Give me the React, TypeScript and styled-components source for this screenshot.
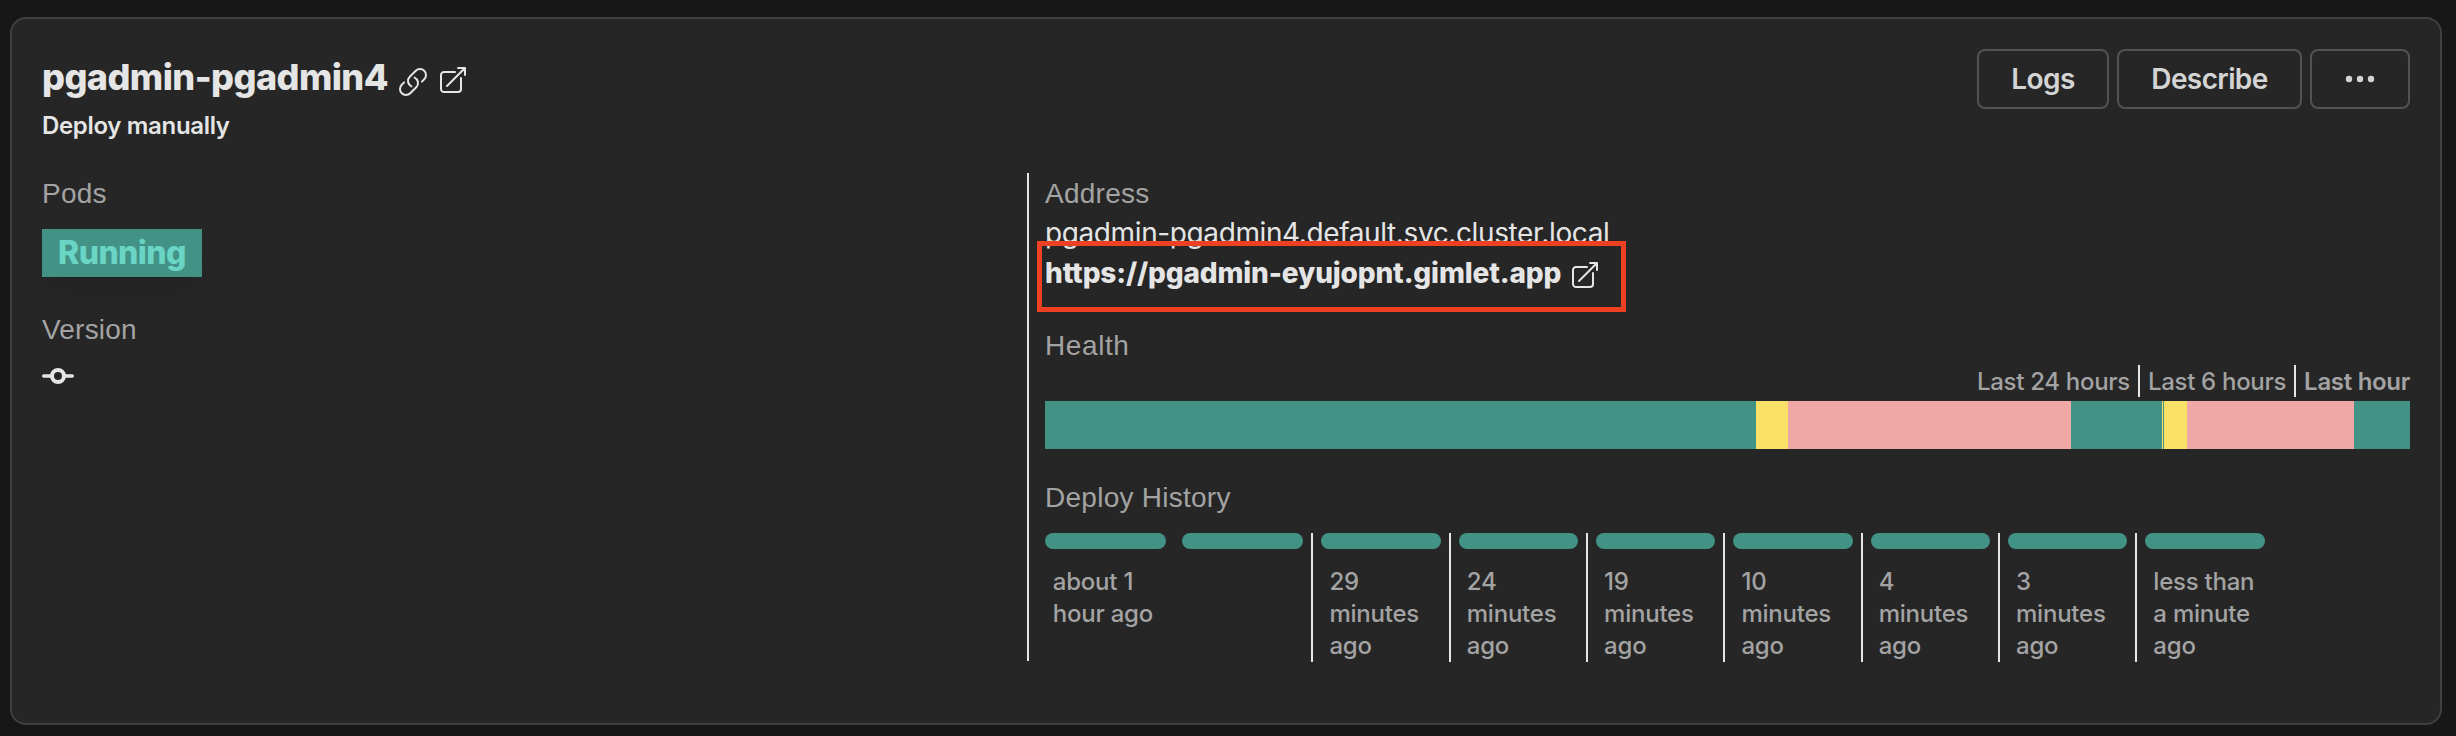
import React from "react";
import styled, { createGlobalStyle } from "styled-components";

const teal = "#429286";
const yellow = "#f9e067";
const pink = "#f0a8a6";

const GlobalStyle = createGlobalStyle`
  * { box-sizing: border-box; }
  body {
    margin: 0;
    background: #171717;
    color: #e5e5e5;
    font-family: Inter, "Liberation Sans", sans-serif;
  }
`;

const Page = styled.main`
  height: 736px;
  padding: 17px 14px 11px 10px;
  background: #171717;
`;

const Card = styled.section`
  height: 708px;
  padding: 30px;
  border: 2px solid #404040;
  border-radius: 16px;
  background: #262626;
`;

const Header = styled.header`
  display: flex;
  justify-content: space-between;
  align-items: flex-start;
  height: 124px;
`;

const Heading = styled.div`
  padding-top: 8px;
`;

const TitleRow = styled.div`
  display: flex;
  align-items: flex-start;
  height: 53px;
`;

const Title = styled.h1`
  width: 355px;
  margin: 0;
  font-size: 36px;
  line-height: 40px;
  font-weight: 800;
  letter-spacing: -0.56px;
  white-space: nowrap;
`;

const Icon = styled.svg<{ $top?: number; $left?: number }>`
  display: block;
  flex: none;
  width: 32px;
  height: 32px;
  margin: ${(p) => p.$top ?? 0}px 0 0 ${(p) => p.$left ?? 0}px;
  fill: none;
  stroke: currentColor;
  stroke-width: 1.5;
  stroke-linecap: round;
  stroke-linejoin: round;
`;

const Subtitle = styled.p`
  margin: 0;
  font-size: 24px;
  line-height: 32px;
  font-weight: 600;
  letter-spacing: -0.33px;
`;

const Actions = styled.div`
  display: flex;
  gap: 8px;
`;

const Button = styled.button<{ $width: number }>`
  display: flex;
  align-items: center;
  justify-content: center;
  width: ${(p) => p.$width}px;
  height: 60px;
  padding: 0;
  border: 2px solid #525252;
  border-radius: 8px;
  background: transparent;
  color: #d4d4d4;
  font: 600 28px/56px Inter, "Liberation Sans", sans-serif;
  letter-spacing: -0.6px;
`;

const Dots = styled.svg`
  display: block;
  width: 32px;
  height: 8px;
  fill: currentColor;
`;

const Body = styled.div`
  display: flex;
  height: 488px;
`;

const Summary = styled.div`
  width: 985px;
`;

const Details = styled.div`
  flex: 1;
  min-width: 0;
  padding-left: 16px;
  border-left: 2px solid #e5e5e5;
`;

const Label = styled.h2<{ $tracking?: number }>`
  height: 40px;
  margin: 0;
  color: #a3a3a3;
  font: 400 28px/42px "Liberation Sans", Arial, sans-serif;
  letter-spacing: ${(p) => p.$tracking ?? 0.2}px;
`;

const Badge = styled.div`
  width: 160px;
  height: 48px;
  margin: 16px 0 32px;
  background: ${teal};
  color: #6ad5c4;
  font-size: 32px;
  line-height: 47px;
  font-weight: 800;
  letter-spacing: -0.6px;
  text-align: center;
  box-shadow: 0 20px 30px -6px rgba(0, 0, 0, 0.07), 0 8px 12px -8px rgba(0, 0, 0, 0.07);
`;

const CommitIcon = styled.svg`
  display: block;
  width: 32px;
  height: 32px;
  margin-top: 11px;
  fill: none;
  stroke: currentColor;
  stroke-linecap: round;
`;

const Host = styled.div`
  font-size: 28px;
  line-height: 40px;
  letter-spacing: -0.39px;
`;

const LinkLine = styled.div`
  position: relative;
  display: flex;
  height: 40px;
  margin-bottom: 32px;
`;

const Url = styled.a`
  width: 524px;
  font-size: 28px;
  line-height: 40px;
  font-weight: 800;
  letter-spacing: -0.15px;
  white-space: nowrap;
`;

const Highlight = styled.span`
  position: absolute;
  top: -12px;
  left: -8px;
  width: 589px;
  height: 71px;
  border: 5px solid #ee4023;
`;

const Ranges = styled.div`
  display: flex;
  justify-content: flex-end;
  height: 32px;
  margin-bottom: 4px;
  color: #a3a3a3;
`;

const Range = styled.span<{ $active?: boolean }>`
  padding: 0 8px;
  border-left: 2px solid #e5e5e5;
  font-size: 24px;
  line-height: 34px;
  font-weight: ${(p) => (p.$active ? 600 : 500)};
  letter-spacing: -0.3px;
  &:first-child { border-left: 0; }
  &:last-child { padding-right: 0; }
`;

const HealthBar = styled.div`
  display: flex;
  height: 48px;
  margin-bottom: 28px;
`;

const Segment = styled.span<{ $color: string; $size: number }>`
  flex: ${(p) => p.$size} 0 0;
  background: ${(p) => p.$color};
`;

const History = styled.div`
  display: grid;
  grid-template-columns: repeat(10, 1fr);
  height: 128px;
  margin: 16px 0 0 -8.15px;
`;

const Deploy = styled.div<{ $divided: boolean }>`
  padding: 0 8px;
  border-left: ${(p) => (p.$divided ? "2px solid #e5e5e5" : "0")};
`;

const Pill = styled.div`
  height: 16px;
  border-radius: 8px;
  background: ${teal};
`;

const Ago = styled.p`
  margin: 17px 0 0;
  padding-left: 8px;
  color: #a3a3a3;
  font-size: 24px;
  line-height: 32px;
  font-weight: 500;
  letter-spacing: -0.24px;
  white-space: pre-line;
`;

const segments: [string, number][] = [
  [teal, 711],
  [yellow, 32],
  [pink, 283],
  [teal, 91],
  [yellow, 1],
  [teal, 1],
  [yellow, 23],
  [pink, 167],
  [teal, 56],
];

const deploys = [
  "about 1\nhour ago",
  "",
  "29\nminutes\nago",
  "24\nminutes\nago",
  "19\nminutes\nago",
  "10\nminutes\nago",
  "4\nminutes\nago",
  "3\nminutes\nago",
  "less than\na minute\nago",
];

const ExternalIcon = ({ top, left }: { top: number; left?: number }) => (
  <Icon viewBox="0 0 24 24" $top={top} $left={left}>
    <path d="M13.5 6H5.25A2.25 2.25 0 0 0 3 8.25v10.5A2.25 2.25 0 0 0 5.25 21h10.5A2.25 2.25 0 0 0 18 18.75V10.5m-10.5 6L21 3m0 0h-5.25M21 3v5.25" />
  </Icon>
);

export default function App() {
  return (
    <Page>
      <GlobalStyle />
      <Card>
        <Header>
          <Heading>
            <TitleRow>
              <Title>pgadmin-pgadmin4</Title>
              <Icon viewBox="0 0 24 24" $top={9}>
                <path d="M13.19 8.688a4.5 4.5 0 0 1 1.242 7.244l-4.5 4.5a4.5 4.5 0 0 1-6.364-6.364l1.757-1.757m13.35-.622 1.757-1.757a4.5 4.5 0 0 0-6.364-6.364l-4.5 4.5a4.5 4.5 0 0 0 1.242 7.244" />
              </Icon>
              <ExternalIcon top={7} left={8} />
            </TitleRow>
            <Subtitle>Deploy manually</Subtitle>
          </Heading>
          <Actions>
            <Button $width={132}>Logs</Button>
            <Button $width={185}>Describe</Button>
            <Button $width={100} aria-label="More">
              <Dots viewBox="0 0 32 8">
                <circle cx="5" cy="4" r="3.2" />
                <circle cx="16" cy="4" r="3.2" />
                <circle cx="27" cy="4" r="3.2" />
              </Dots>
            </Button>
          </Actions>
        </Header>
        <Body>
          <Summary>
            <Label>Pods</Label>
            <Badge>Running</Badge>
            <Label>Version</Label>
            <CommitIcon viewBox="0 0 32 32">
              <circle cx="16" cy="16" r="6" strokeWidth="4" />
              <path d="M1.8 16H9M23 16h7.2" strokeWidth="3.6" />
            </CommitIcon>
          </Summary>
          <Details>
            <Label $tracking={0.25}>Address</Label>
            <Host>pgadmin-pgadmin4.default.svc.cluster.local</Host>
            <LinkLine>
              <Url>https://pgadmin-eyujopnt.gimlet.app</Url>
              <ExternalIcon top={6} />
              <Highlight />
            </LinkLine>
            <Label $tracking={0.6}>Health</Label>
            <Ranges>
              <Range>Last 24 hours</Range>
              <Range>Last 6 hours</Range>
              <Range $active>Last hour</Range>
            </Ranges>
            <HealthBar>
              {segments.map(([color, size], i) => (
                <Segment key={i} $color={color} $size={size} />
              ))}
            </HealthBar>
            <Label $tracking={0.26}>Deploy History</Label>
            <History>
              {deploys.map((ago, i) => (
                <Deploy key={i} $divided={i > 1}>
                  <Pill />
                  <Ago>{ago}</Ago>
                </Deploy>
              ))}
            </History>
          </Details>
        </Body>
      </Card>
    </Page>
  );
}
